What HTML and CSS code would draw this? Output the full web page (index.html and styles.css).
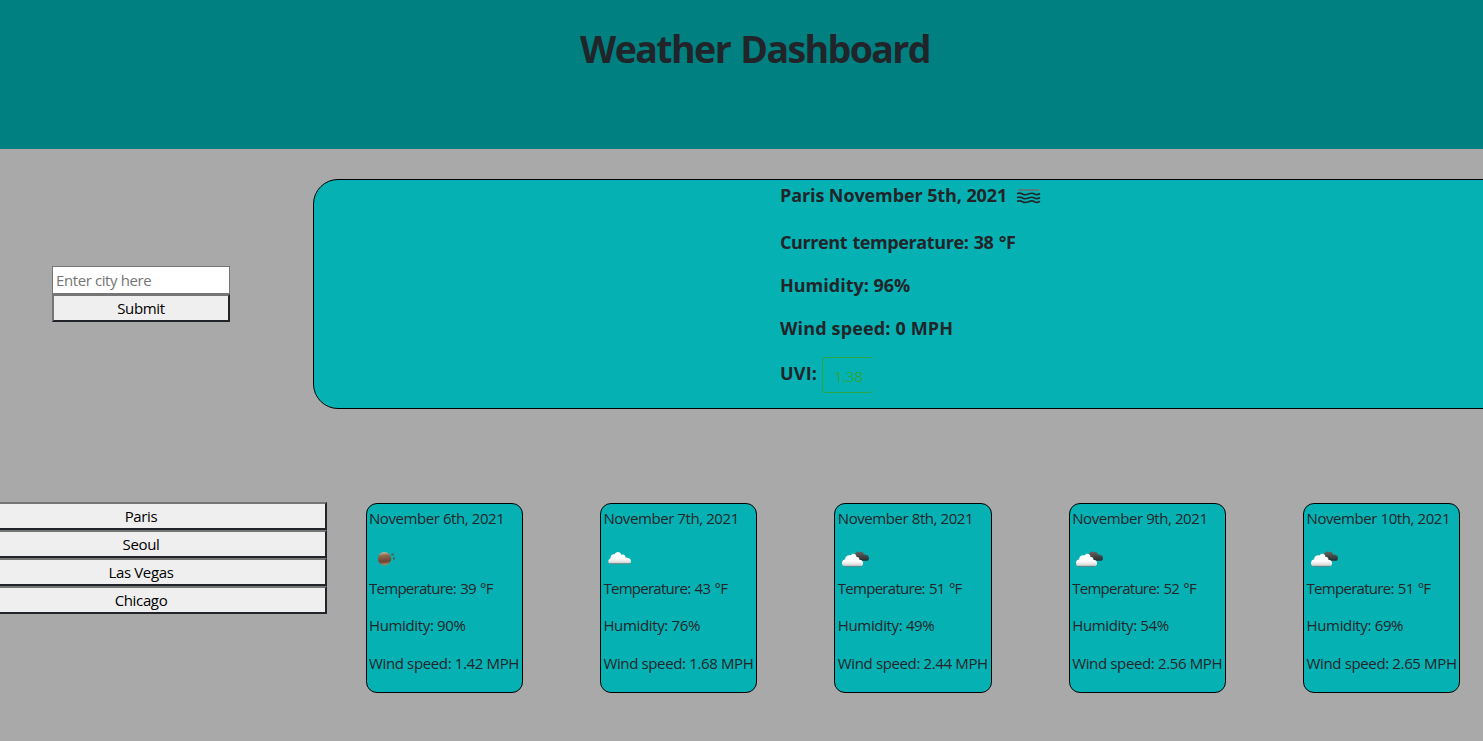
FILE: index.html
```html
<!DOCTYPE html>
<html lang="en">
<head>
<meta charset="utf-8">
<title>Weather Dashboard</title>
<link rel="stylesheet" href="styles.css">
</head>
<body>
<svg class="defs" aria-hidden="true">
  <defs>
    <linearGradient id="white" x1="0" y1="0" x2="0" y2="1"><stop offset=".6" stop-color="#fff"/><stop offset="1" stop-color="#cfcfcf"/></linearGradient>
    <linearGradient id="dark" x1="0" y1="0" x2="0" y2="1"><stop offset="0" stop-color="#6b6260"/><stop offset=".6" stop-color="#3c4344"/><stop offset="1" stop-color="#242e2f"/></linearGradient>
    <linearGradient id="moon" x1="0" y1="0" x2="0.100" y2="1"><stop offset="0" stop-color="#d8cba8"/><stop offset=".3" stop-color="#8f6a50"/><stop offset=".75" stop-color="#6a4433"/><stop offset="1" stop-color="#a08a70"/></linearGradient>
    <symbol id="clouds" viewBox="0 0 40 28">
      <path fill="url(#dark)" d="M18 8c0-3 3-4.500 5.500-3 1.500-.5 3 .3 3.500 2.500 2.500 0 5 1 5 3.500 0 2-1 2.800-3 2.800h-5l-6-4z"/>
      <path fill="url(#white)" d="M7 19c-2 0-2.500-3.500-1.500-5 .7-1 1.500-1.500 2.500-1.500 0-3 3-5 5.500-4 2-3 6-1.500 6 1.500 2-.3 3 1 3 3 3 0 4 2 3.500 4-.3 1.500-1 2-2 2z"/>
      <path stroke="#777" stroke-width=".8" d="M7 19.300h17"/>
    </symbol>
  </defs>
</svg>
<header class="header"><h1>Weather Dashboard</h1></header>
<main>
  <section class="top">
    <form class="search">
      <input type="text" placeholder="Enter city here">
      <button type="button">Submit</button>
    </form>
    <div class="current">
      <h2 class="place"><span>Paris November 5th, 2021</span>
        <svg class="mist" width="26" height="16" viewBox="0 0 26 16" fill="none" stroke="#20282b" stroke-width="1.700">
          <path stroke="#5f7476" d="M2 2h21"/>
          <path d="M1 5.500q3-1 5.500.5t6 0 6 0 5.500-.5M1 9.500q3-1 5.500.5t6 0 6 0 5.500-.5M1 13.200q3-1 5.500.5t6 0 6 0 5.500-.5"/>
        </svg></h2>
      <h2 class="temp">Current temperature: 38 °F</h2>
      <h2 class="hum">Humidity: 96%</h2>
      <h2 class="wind">Wind speed: 0 MPH</h2>
      <div class="uvi"><h2>UVI:</h2><span class="badge">1.38</span></div>
    </div>
  </section>
  <section class="bottom">
    <div class="history">
      <button>Paris</button><button>Seoul</button><button>Las Vegas</button><button>Chicago</button>
    </div>
    <div class="forecast">
      <article class="card"><p class="date">November 6th, 2021</p>
        <svg class="icon" viewBox="0 0 40 28"><circle cx="16.500" cy="11.700" r="6.700" fill="url(#moon)"/><path fill="#4d5a50" d="M23.500 6.500h2v2h-2zM25 10.500h2v2h-2z"/></svg>
        <p class="degrees">Temperature: 39 °F</p><p>Humidity: 90%</p><p class="speed">Wind speed: 1.42 MPH</p></article>
      <article class="card"><p class="date">November 7th, 2021</p>
        <svg class="icon" viewBox="0 0 40 28"><path fill="url(#white)" d="M8.500 16.500c-3 0-3-4 0-5 0-3 1.500-4.500 4-4.200 2-3.500 6-3 7 .7 2-1 4 0 4 2.500 3.500 0 5.500 1.500 5.500 4 0 1.500-1 2-2 2z"/><path stroke="#777" stroke-width=".8" d="M8 16.700h20"/></svg>
        <p class="degrees">Temperature: 43 °F</p><p>Humidity: 76%</p><p class="speed">Wind speed: 1.68 MPH</p></article>
      <article class="card"><p class="date">November 8th, 2021</p>
        <svg class="icon"><use href="#clouds"/></svg>
        <p class="degrees">Temperature: 51 °F</p><p>Humidity: 49%</p><p class="speed">Wind speed: 2.44 MPH</p></article>
      <article class="card"><p class="date">November 9th, 2021</p>
        <svg class="icon"><use href="#clouds"/></svg>
        <p class="degrees">Temperature: 52 °F</p><p>Humidity: 54%</p><p class="speed">Wind speed: 2.56 MPH</p></article>
      <article class="card"><p class="date">November 10th, 2021</p>
        <svg class="icon"><use href="#clouds"/></svg>
        <p class="degrees">Temperature: 51 °F</p><p>Humidity: 69%</p><p class="speed">Wind speed: 2.65 MPH</p></article>
    </div>
  </section>
</main>
</body>
</html>
```
FILE: styles.css
```css
* { box-sizing: border-box; }
body {
  margin: 0;
  height: 741px;
  overflow: hidden;
  background: #a9a9a9;
  color: #212529;
  font: 15px/22.5px "Open Sans", "Noto Sans", sans-serif;
}
h1, h2, p { margin: 0; }
.defs { display: block; width: 0; height: 0; }
.header { height: 149px; padding: 25px 0 0 27px; background: #008080; text-align: center; }
h1 { font-size: 37.5px; line-height: 48px; font-weight: 700; letter-spacing: -1.6px; word-spacing: 2px; }
h2 { font-size: 18px; line-height: 22px; font-weight: 700; letter-spacing: -0.1px; }
.top { display: grid; grid-template-columns: 313px 1200px; height: 354px; padding-top: 30px; }
.search { display: flex; flex-direction: column; width: 178px; margin: 87px 0 0 52px; }
.search input { height: 28px; padding: 2px 2px 2px 3px; border: 1px solid #767676; background: #fff; font: inherit; letter-spacing: -0.4px; }
.search input::placeholder { color: #757575; }
button { display: block; height: 28px; padding: 1px 0 0; border: 2px solid; border-color: #767676 #212529 #212529 #767676; background: #efefef; color: #000; font: inherit; letter-spacing: -0.35px; }
.current { height: 230px; padding: 4px 0 0 466px; border: 1px solid #000; border-radius: 25px; background: #06b1b3; }
.place { display: flex; align-items: center; gap: 9px; margin-bottom: 25px; }
.mist { margin-top: 2px; }
.temp, .hum { margin-bottom: 21px; }
.temp { letter-spacing: -0.4px; word-spacing: 1px; }
.hum { letter-spacing: 0; }
.wind { margin-bottom: 18px; letter-spacing: 0.15px; }
.uvi { display: flex; gap: 5px; }
.uvi h2 { margin-top: 5px; letter-spacing: 0.2px; }
.badge { width: 51px; height: 36px; padding: 7px 0 0 11px; border: 1px solid #28a745; border-right: 0; border-radius: 4px; color: #28a745; font-size: 15px; letter-spacing: -0.3px; }
.bottom { display: grid; grid-template-columns: 327px 1fr; }
.history { margin: -1px 0 0 -45px; }
.history button { width: 372px; }
.forecast { display: flex; gap: 77px; padding-left: 38.5px; }
.card { flex: 0 0 157.4px; min-width: 0; height: 190px; padding: 3px 0 0 2.5px; border: 1px solid #000; border-radius: 11px; background: #06b1b3; white-space: nowrap; }
.card p { margin-bottom: 15px; letter-spacing: -0.35px; }
.card .date { margin-bottom: 17px; letter-spacing: -0.42px; }
.card .degrees { letter-spacing: -0.72px; word-spacing: 1px; }
.card .speed { letter-spacing: -0.36px; }
.icon { display: block; width: 40px; height: 28px; margin: 0 0 2px -1px; }
```
